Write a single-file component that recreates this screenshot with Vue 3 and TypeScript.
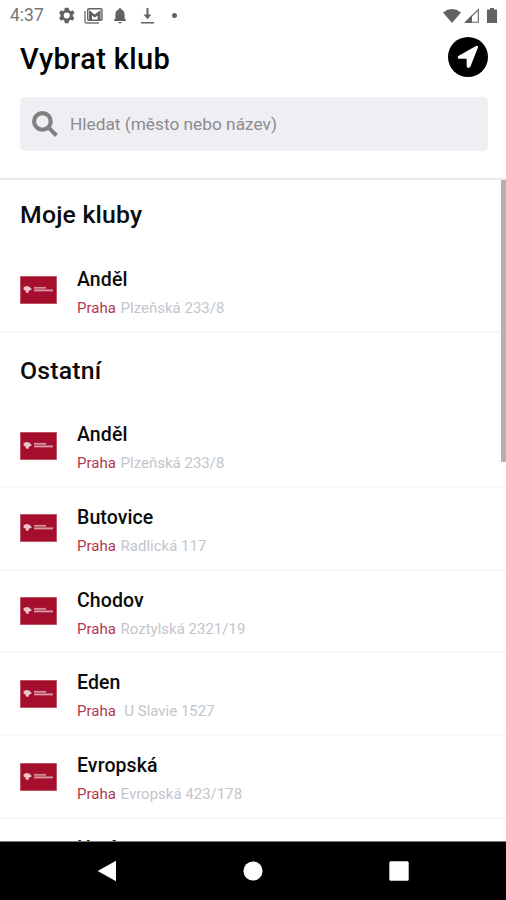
<script setup lang="ts">
interface Club {
  name: string
  city: string
  address: string
}

interface Section {
  title: string
  clubs: Club[]
}

const sections: Section[] = [
  {
    title: 'Moje kluby',
    clubs: [{ name: 'Anděl', city: 'Praha', address: 'Plzeňská 233/8' }],
  },
  {
    title: 'Ostatní',
    clubs: [
      { name: 'Anděl', city: 'Praha', address: 'Plzeňská 233/8' },
      { name: 'Butovice', city: 'Praha', address: 'Radlická 117' },
      { name: 'Chodov', city: 'Praha', address: 'Roztylská 2321/19' },
      { name: 'Eden', city: 'Praha', address: '\u00a0U Slavie 1527' },
      { name: 'Evropská', city: 'Praha', address: 'Evropská 423/178' },
      { name: 'Harfa', city: '', address: '' },
    ],
  },
]
</script>

<template>
  <div class="screen">
    <div class="status">
      <span class="time">4:37</span>
      <svg class="gear" viewBox="2 2 20 20"><path fill-rule="evenodd" d="M19.400 13a8 8 0 0 0 0-2l2.100-1.600-2-3.500-2.500 1a8 8 0 0 0-1.700-1L14.500 3h-4.500l-.5 2.900a8 8 0 0 0-1.700 1l-2.500-1-2 3.500L5.100 11a8 8 0 0 0 0 2l-1.800 1.600 2 3.500 2.500-1a8 8 0 0 0 1.700 1l.5 2.900h4.500l.5-2.900a8 8 0 0 0 1.700-1l2.500 1 2-3.500zM12.300 8.400a3.600 3.600 0 1 1 0 7.200 3.600 3.600 0 0 1 0-7.200z" /></svg>
      <svg class="mail" viewBox="0 0 19 16"><path d="M1 3v10.500q0 1.500 1.500 1.500H15" fill="none" stroke="#777" stroke-width="1.400" /><rect x="3.700" y=".7" width="14.300" height="11.600" rx="1" fill="none" stroke="#626262" stroke-width="1.400" /><path d="M5 12V2l5.800 4.500L16.600 2v10h-3V7.400l-2.800 2-2.800-2V12z" /></svg>
      <svg class="bell" viewBox="0 0 12 16"><path d="M6 0q1.300 0 1.300 1.600Q10.600 2.600 10.600 7v3.500L12 12v1H0v-1l1.400-1.500V7q0-4.400 3.300-5.400Q4.700 0 6 0zM4.500 14h3q0 1.500-1.500 1.500T4.500 14z" /></svg>
      <svg class="download" viewBox="0 0 13 16"><path d="M5.500 0h2v6.500h3L6.500 11.300 2.500 6.500h3zM0 14h13v1.600H0z" /></svg>
      <span class="dot"></span>
      <span class="spring"></span>
      <svg class="wifi" viewBox="0 0 18 14"><path d="M0 3.500Q9-3.300 18 3.500L9 14z" /></svg>
      <svg class="signal" viewBox="0 0 15 15"><path d="M14.300 1.500v12.800H1.500z" fill="none" stroke="#626262" stroke-width="1.100" /><path d="M8 7.300V15H.5z" /></svg>
      <svg class="battery" viewBox="0 0 10 15"><path d="M3 0h4v1.500h3V15H0V1.500h3z" /></svg>
    </div>

    <header class="header">
      <div class="title-row">
        <h1>Vybrat klub</h1>
        <button class="locate" type="button" aria-label="Poloha">
          <svg viewBox="0 0 39 39"><path d="M29.200 10.200 21.800 29q-.6 1.200-1.800 1h-.6q-1.200-.2-1.200-1.500v-7.300H11q-1.300 0-1.500-1.200-.1-1.200 1-1.800L27.300 8.800q2.500-.8 1.900 1.400z" /></svg>
        </button>
      </div>
      <label class="search">
        <svg viewBox="0 0 25 25"><circle cx="10" cy="10" r="8" /><path d="m16 16 7.500 7.500" /></svg>
        <span>Hledat (město nebo název)</span>
      </label>
    </header>

    <main class="list">
      <section v-for="section in sections" :key="section.title">
        <h2>{{ section.title }}</h2>
        <div v-for="club in section.clubs" :key="club.name" class="club">
          <svg class="logo" viewBox="0 0 37 28">
            <rect width="37" height="28" fill="#c9737d" />
            <rect x=".7" y=".7" width="35.600" height="26.600" fill="#a50e2c" />
            <path d="M3.500 11.500 6 10l3 .6 3 2.600-3 1.500L8 17.200 5.500 16l.2-1.500-2-.8z" fill="#edc6cd" />
            <path d="M14 11.800h12" stroke="#d0919d" stroke-width="1.800" />
            <path d="M14 14.400h19" stroke="#d899a5" stroke-width="1.900" />
          </svg>
          <div class="info">
            <span class="name">{{ club.name }}</span>
            <span class="place"><span class="city">{{ club.city }}</span> {{ club.address }}</span>
          </div>
        </div>
      </section>
      <i class="scrollbar"></i>
    </main>

    <nav class="nav">
      <svg viewBox="0 0 20 22"><path d="M19 .8v20.400L.7 11z" /></svg>
      <svg viewBox="0 0 20 22"><circle cx="10" cy="11" r="9.600" /></svg>
      <svg viewBox="0 0 20 22"><rect x=".3" y="1.300" width="19.400" height="19.400" rx="1.500" /></svg>
    </nav>
  </div>
</template>

<style>
body {
  margin: 0;
}
</style>

<style scoped>
.screen {
  width: 506px;
  height: 900px;
  display: flex;
  flex-direction: column;
  overflow: hidden;
  background: #fff;
  color: #0c0c0c;
  font-family: Roboto, sans-serif;
}
.status {
  height: 31px;
  flex: none;
  display: flex;
  align-items: center;
  padding: 0 9px 0 10px;
  box-sizing: border-box;
  color: #777;
}
.status svg {
  fill: #626262;
  flex: none;
}
.time {
  width: 48px;
  font-size: 17.5px;
  line-height: 31px;
}
.gear { width: 17px; height: 17px; margin-right: 9px; }
.mail { width: 19px; height: 16px; margin-right: 11px; }
.bell { width: 12px; height: 16px; margin-right: 15px; }
.download { width: 13px; height: 16px; margin-right: 18px; }
.dot {
  width: 5px;
  height: 5px;
  border-radius: 50%;
  background: #626262;
}
.spring { flex: 1; }
.wifi { width: 18px; height: 14px; margin-right: 3px; }
.signal { width: 15px; height: 15px; margin-right: 8px; }
.battery { width: 10px; height: 15px; }
.header {
  height: 149px;
  flex: none;
  box-sizing: border-box;
  padding: 6px 18px 0 20px;
  border-bottom: 2px solid #ebebeb;
}
.title-row {
  height: 40px;
  display: flex;
  align-items: center;
  justify-content: space-between;
}
h1, h2 {
  margin: 0;
  font-weight: 500;
}
h1 {
  font-size: 29px;
  letter-spacing: 0.35px;
  line-height: 40px;
  padding-top: 3px;
  color: #000;
}
.locate {
  width: 40px;
  height: 40px;
  padding: 0;
  border: 0;
  border-radius: 50%;
  background: #000;
}
.locate svg {
  display: block;
  width: 40px;
  height: 40px;
  fill: #fff;
}
.search {
  height: 54px;
  margin-top: 20px;
  border-radius: 5px;
  background: #efeef3;
  display: flex;
  align-items: center;
  padding-left: 12px;
  color: #8b8b90;
  font-size: 17.3px;
}
.search svg {
  width: 26px;
  height: 26px;
  margin-right: 12px;
  fill: none;
  stroke: #808080;
  stroke-width: 4;
}
.search span {
  padding-bottom: 1px;
}
.list {
  position: relative;
  flex: 1;
  min-height: 0;
  overflow: hidden;
}
h2 {
  height: 72.7px;
  box-sizing: border-box;
  padding: 22px 0 0 20px;
  font-size: 24.8px;
  letter-spacing: 0.2px;
  line-height: 32px;
}
section:first-child h2 {
  height: 69.8px;
  padding-top: 19px;
}
.club {
  height: 82.75px;
  box-sizing: border-box;
  border-bottom: 2px solid #f7f7f7;
  padding-left: 20px;
  display: flex;
  align-items: center;
}
.logo {
  width: 37px;
  height: 28px;
  margin-right: 20px;
}
.info {
  display: flex;
  flex-direction: column;
  padding-top: 7px;
}
.name {
  font-size: 19.5px;
  font-weight: 500;
  letter-spacing: 0.1px;
  line-height: 28px;
}
.place {
  font-size: 15px;
  line-height: 28px;
  color: #c3c5cc;
  white-space: pre;
}
.city {
  color: #b23850;
  margin-right: 1px;
}
.scrollbar {
  position: absolute;
  top: -2px;
  right: 0;
  width: 5px;
  height: 284px;
  background: #b2b2b2;
}
.nav {
  height: 59px;
  flex: none;
  box-sizing: border-box;
  border-top: 1px solid #777;
  background: #000;
  display: flex;
  align-items: center;
  justify-content: center;
  gap: 126px;
}
.nav svg {
  width: 20px;
  height: 22px;
  fill: #fff;
}
</style>
